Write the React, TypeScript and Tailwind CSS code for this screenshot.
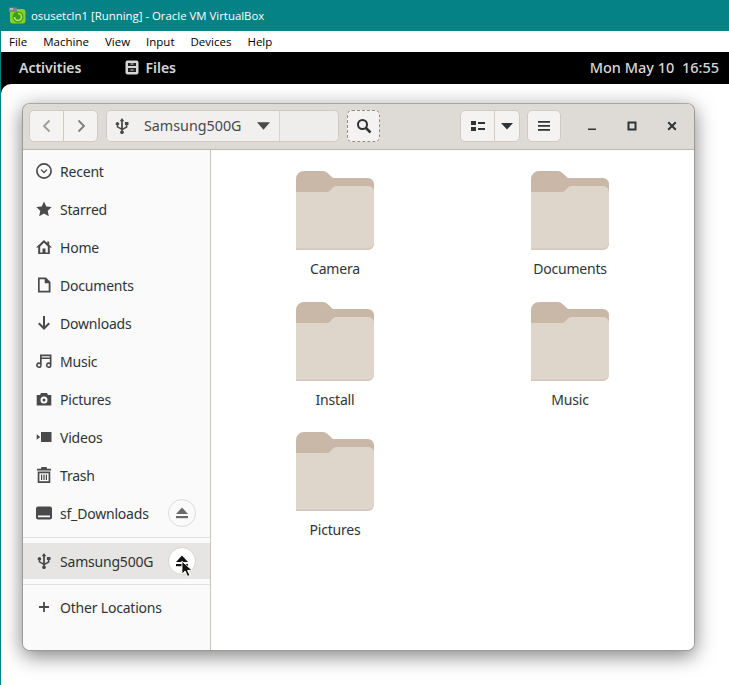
import type { ReactNode } from 'react';

const ICON = '#4a4a4a';

function Icon({ children, className = '' }: { children: ReactNode; className?: string }) {
  return (
    <svg viewBox="0 0 16 16" width="16" height="16" className={`shrink-0 ${className}`} fill={ICON}>
      {children}
    </svg>
  );
}

const UsbIcon = () => (
  <Icon>
    <path d="M8 0 10.300 3.200H8.900V10.300L11.900 8.600V6.900H10.900V3.900H14.500V6.900H13.400V9.400L8.900 12V12.800A1.800 1.800 0 1 1 7.100 12.800V11.800L2.700 9.300V7.300A1.700 1.700 0 1 1 4.200 7.300V8.500L7.100 10.100V3.200H5.700z" />
  </Icon>
);

const sidebarIcons: Record<string, ReactNode> = {
  Recent: (
    <Icon>
      <circle cx="8" cy="8" r="7.100" fill="none" stroke={ICON} strokeWidth="1.700" />
      <path d="M5 6.600 8 9.500l3-2.900" fill="none" stroke={ICON} strokeWidth="1.300" />
    </Icon>
  ),
  Starred: (
    <Icon>
      <path d="M8 .5l2.300 4.900 5.400.7-4 3.700 1.100 5.400L8 12.600l-4.800 2.600 1.100-5.400-4-3.700 5.400-.7z" />
    </Icon>
  ),
  Home: (
    <Icon>
      <path
        fillRule="evenodd"
        d="M8 1 0 8.400h2.200V15h11.600V8.400H16L13.200 5.800V2.500h-2v1.500zM8 3.800l3.800 3.600v6h-2.300V9.500h-3v3.900H4.200v-6z"
      />
    </Icon>
  ),
  Documents: (
    <Icon>
      <path
        fillRule="evenodd"
        d="M2 .5h8L14.500 5v10.500H2zM3.700 2.200v11.600h9V6.300H8.700V2.200z"
      />
    </Icon>
  ),
  Downloads: (
    <Icon>
      <path d="M7 1h2v10l3.500-3.500L13.900 9 8 14.900 2.100 9l1.400-1.500L7 11z" />
    </Icon>
  ),
  Music: (
    <Icon>
      <path
        fillRule="evenodd"
        d="M4 1.500h11.500v10.700a2.800 2.800 0 1 1-1.700-2.600V6H5.700v6.200a2.800 2.800 0 1 1-1.700-2.600zM5.700 3.200v1.200h8.100V3.200zM3 10.900a1.300 1.300 0 1 0 0 2.600 1.300 1.300 0 0 0 0-2.600zm9.700 0a1.300 1.300 0 1 0 0 2.600 1.300 1.300 0 0 0 0-2.600z"
      />
    </Icon>
  ),
  Pictures: (
    <Icon>
      <path
        fillRule="evenodd"
        d="M5 2h6l1 2h3.300v10.500H.7V4H4zM8 5.500a3.500 3.500 0 1 0 0 7 3.500 3.500 0 0 0 0-7zm0 2a1.500 1.500 0 1 1 0 3 1.500 1.500 0 0 1 0-3z"
      />
    </Icon>
  ),
  Videos: (
    <Icon>
      <path d="M5 3h10.500v10H5zM.7 5.200l3.500 2.800-3.500 2.800z" />
    </Icon>
  ),
  Trash: (
    <Icon>
      <path
        fillRule="evenodd"
        d="M5.500 0h5l.6 1.800h4v1.700H.9V1.800h4zM1.700 4.500h12.600V16H1.700zM3.400 6.200v8.100h9.200V6.200zM5 7.500h1.200v5.500H5zM7.400 7.500h1.200v5.500H7.400zM9.800 7.500H11v5.500H9.800z"
      />
    </Icon>
  ),
  sf_Downloads: (
    <Icon>
      <path
        fillRule="evenodd"
        d="M2 1.500h12A2 2 0 0 1 16 3.500v9a2 2 0 0 1-2 2H2a2 2 0 0 1-2-2v-9a2 2 0 0 1 2-2zM2 10.500v1.800h12v-1.800z"
      />
    </Icon>
  ),
  Samsung500G: <UsbIcon />,
  'Other Locations': (
    <Icon>
      <path d="M7.100 3h1.800v4.100H13v1.800H8.900V13H7.100V8.900H3V7.100h4.100z" />
    </Icon>
  ),
};

function EjectGlyph({ color = ICON }: { color?: string }) {
  return (
    <svg viewBox="0 0 14 12" width="14" height="12" fill={color}>
      <path d="M7 0.500 13 7H1z" />
      <rect x="1" y="9" width="12" height="2.200" />
    </svg>
  );
}

function SidebarRow({ label, eject, active }: { label: string; eject?: boolean; active?: boolean }) {
  return (
    <div className={`flex items-center pl-[13px] ${active ? 'h-[36px] bg-[#e6e5e3]' : 'h-[38px]'}`}>
      {sidebarIcons[label]}
      <span className="ml-[8px] flex-1 text-[14px] tracking-[-0.2px] text-[#2e3436]">{label}</span>
      {eject && (
        <span
          className={`relative mr-[14px] flex h-[28px] w-[28px] items-center justify-center rounded-full border ${
            active ? 'border-[#d8d5d1] bg-white' : 'border-[#dedbd7] bg-[#fafafa]'
          }`}
        >
          <EjectGlyph color={active ? '#111' : '#6a6a6a'} />
          {active && (
            <svg viewBox="0 0 14 20" width="13" height="19" className="absolute left-[12px] top-[12px]">
              <path d="M1 1v14l3.500-3.300L7 17.500l2.600-1.200-2.500-5.300h5z" fill="#111" stroke="#fff" strokeWidth="1" />
            </svg>
          )}
        </span>
      )}
    </div>
  );
}

function Folder({ label }: { label: string }) {
  return (
    <div className="flex h-[130.500px] flex-col items-center">
      <svg viewBox="0 0 78 79" width="78" height="79" className="shrink-0">
        <path d="M0 8a8 8 0 0 1 8-8h19a6 6 0 0 1 4.500 2L37 7h35a6 6 0 0 1 6 6v30H0z" fill="#c9b8a8" />
        <path d="M0 21h31a4 4 0 0 0 3-1.300L37 16.500a5 5 0 0 1 3.500-1.500H72a6 6 0 0 1 6 6v52a6 6 0 0 1-6 6H0z" fill="#d3c6ba" />
        <path d="M0 21h31a4 4 0 0 0 3-1.300L37 16.500a5 5 0 0 1 3.500-1.500H72a6 6 0 0 1 6 6v50.500a6 6 0 0 1-6 6H0z" fill="#ded5cb" />
      </svg>
      <span className="mt-[9px] text-[14px] leading-[20px] tracking-[-0.2px] text-[#2e3436]">{label}</span>
    </div>
  );
}

const btn = 'flex h-[32px] items-center justify-center border border-[#cfcac4] bg-[#f4f3f1]';

export default function App() {
  return (
    <div className="flex h-[685px] w-[729px] flex-col overflow-hidden bg-[#058285] font-['Noto_Sans',sans-serif]">
      {/* VirtualBox title bar */}
      <div className="flex h-[31px] items-center pl-[9px] font-['Open_Sans',sans-serif] text-[11.400px] text-white">
        <svg viewBox="0 0 17 17" width="17" height="17" className="mr-[5px] shrink-0">
          <rect x="1" y="2" width="15.500" height="14.500" rx="3" fill="#86cf2e" />
          <circle cx="9" cy="10" r="5.500" fill="#3f9d1c" />
          <path d="M9 6.500a3.500 3.500 0 1 1-3.500 3.500" fill="none" stroke="#b5e86a" strokeWidth="1.700" />
          <rect x="0" y="0.500" width="8" height="4.500" fill="#7b8a7b" />
          <rect x="1" y="1.500" width="3" height="1" fill="#e8e8e8" />
        </svg>
        osusetcln1 [Running] - Oracle VM VirtualBox
      </div>

      {/* menu bar */}
      <div className="ml-px flex h-[21px] items-center gap-[16px] bg-white pl-[8px] font-['Open_Sans',sans-serif] text-[11.500px] text-black">
        <span>File</span>
        <span>Machine</span>
        <span>View</span>
        <span>Input</span>
        <span>Devices</span>
        <span>Help</span>
      </div>

      {/* GNOME top bar */}
      <div className="ml-px flex h-[32px] items-center bg-black pb-[1px] pl-[18px] pr-[10px] text-[14px] font-semibold text-[#d6d6d6]">
        <span>Activities</span>
        <svg viewBox="0 0 14 15" width="14" height="15" className="ml-[44px] mr-[6px]">
          <rect x=".5" y=".5" width="13" height="14" rx="2" fill="#d6d6d6" />
          <path d="M3 3h8v3H3zM3 8h8v4H3z" fill="#222" />
          <path d="M5.500 4h3M5.500 10h3" stroke="#d6d6d6" />
        </svg>
        <span>Files</span>
        <span className="ml-auto text-[14.500px] font-medium">Mon May 10&nbsp;&nbsp;16:55</span>
      </div>

      {/* desktop */}
      <div className="ml-px flex-1 bg-black">
        <div className="h-full rounded-tl-[10px] bg-white pl-[21px] pt-[19px]">
          <div className="flex h-[548px] w-[673px] flex-col overflow-hidden rounded-[8px] border border-[#9a9a98] border-t-[#a9a7a3] bg-[#fafafa] shadow-[0_5px_20px_rgba(0,0,0,0.5)]">
            {/* header bar */}
            <div className="flex h-[46px] shrink-0 items-start border-b border-[#bfb8b1] bg-[#dedbd7] pl-[6px] pt-[6px]">
              <div className={`${btn} w-[35px] rounded-l-[5px]`}>
                <svg viewBox="0 0 16 16" width="16" height="16" fill="none" stroke="#9a9c9c" strokeWidth="1.800">
                  <path d="M10.500 2.500 5 8l5.500 5.500" />
                </svg>
              </div>
              <div className={`${btn} -ml-px w-[35px] rounded-r-[5px]`}>
                <svg viewBox="0 0 16 16" width="16" height="16" fill="none" stroke="#7d7f7f" strokeWidth="1.800">
                  <path d="M5.500 2.500 11 8l-5.500 5.500" />
                </svg>
              </div>
              <div className="ml-[8px] flex h-[32px] w-[233px] overflow-hidden rounded-[5px] border border-[#cfcac4] bg-[#efedeb]">
                <div className="flex w-[173px] items-center border-r border-[#d8d4cf] bg-[#f1f0ee] pl-[7px] text-[14.300px] text-[#454a4c]">
                  <UsbIcon />
                  <span className="ml-[14px]">Samsung500G</span>
                  <svg viewBox="0 0 12 7" width="13" height="8" className="ml-[15px]" fill="#4a4a4a">
                    <path d="M0 0h12L6 7z" />
                  </svg>
                </div>
              </div>
              <div className="ml-[8px] flex h-[32px] w-[33px] items-center justify-center rounded-[5px] border border-dashed border-[#8f8c88] bg-[#f4f3f1]">
                <svg viewBox="0 0 16 16" width="16" height="16" fill="none" stroke="#2e3436" strokeWidth="2">
                  <circle cx="6.500" cy="6.500" r="4.500" />
                  <path d="m10 10 4.500 4.500" strokeWidth="2.500" />
                </svg>
              </div>
              <div className={`${btn} ml-[80px] w-[35px] rounded-l-[5px]`}>
                <svg viewBox="0 0 14 10" width="14" height="10" fill="#2e3436">
                  <path d="M0 0h5v4H0zM0 6h5v4H0zM7 1h7v2H7zM7 7h7v2H7z" />
                </svg>
              </div>
              <div className={`${btn} -ml-px w-[26px] rounded-r-[5px]`}>
                <svg viewBox="0 0 12 7" width="12" height="7" fill="#2e3436">
                  <path d="M0 0h12L6 6.500z" />
                </svg>
              </div>
              <div className={`${btn} ml-[7px] w-[34px] rounded-[5px]`}>
                <svg viewBox="0 0 12 10" width="12" height="10" fill="#2e3436">
                  <path d="M0 0h12v1.800H0zM0 4h12v1.800H0zM0 8h12v1.800H0z" />
                </svg>
              </div>
              <div className="ml-[11px] flex h-[32px] w-[120px] items-center">
                <span className="flex w-[40px] justify-center">
                  <svg viewBox="0 0 10 10" width="10" height="10" fill="#2e3436">
                    <path d="M1 7.500h8V9H1z" />
                  </svg>
                </span>
                <span className="flex w-[40px] justify-center">
                  <svg viewBox="0 0 10 10" width="10" height="10" fill="none" stroke="#2e3436" strokeWidth="2">
                    <rect x="1.500" y="1.500" width="7" height="7" />
                  </svg>
                </span>
                <span className="flex w-[40px] justify-center">
                  <svg viewBox="0 0 10 10" width="10" height="10" fill="none" stroke="#2e3436" strokeWidth="2">
                    <path d="m1.200 1.200 7.600 7.600M8.800 1.200 1.200 8.800" />
                  </svg>
                </span>
              </div>
            </div>

            <div className="flex min-h-0 flex-1">
              {/* sidebar */}
              <div className="flex w-[188px] shrink-0 flex-col border-r border-[#c9c5bf] bg-[#fafafa] pt-[2px]">
                <SidebarRow label="Recent" />
                <SidebarRow label="Starred" />
                <SidebarRow label="Home" />
                <SidebarRow label="Documents" />
                <SidebarRow label="Downloads" />
                <SidebarRow label="Music" />
                <SidebarRow label="Pictures" />
                <SidebarRow label="Videos" />
                <SidebarRow label="Trash" />
                <SidebarRow label="sf_Downloads" eject />
                <div className="mt-[5px] h-px bg-[#e3e1de]" />
                <div className="mt-[5px]">
                  <SidebarRow label="Samsung500G" eject active />
                </div>
                <div className="mt-[5px] h-px bg-[#e3e1de]" />
                <div className="mt-[3px]">
                  <SidebarRow label="Other Locations" />
                </div>
              </div>

              {/* icon view */}
              <div className="grid flex-1 grid-cols-2 content-start bg-white px-[6.500px] pt-[21px]">
                <Folder label="Camera" />
                <Folder label="Documents" />
                <Folder label="Install" />
                <Folder label="Music" />
                <Folder label="Pictures" />
              </div>
            </div>
          </div>
        </div>
      </div>
    </div>
  );
}
